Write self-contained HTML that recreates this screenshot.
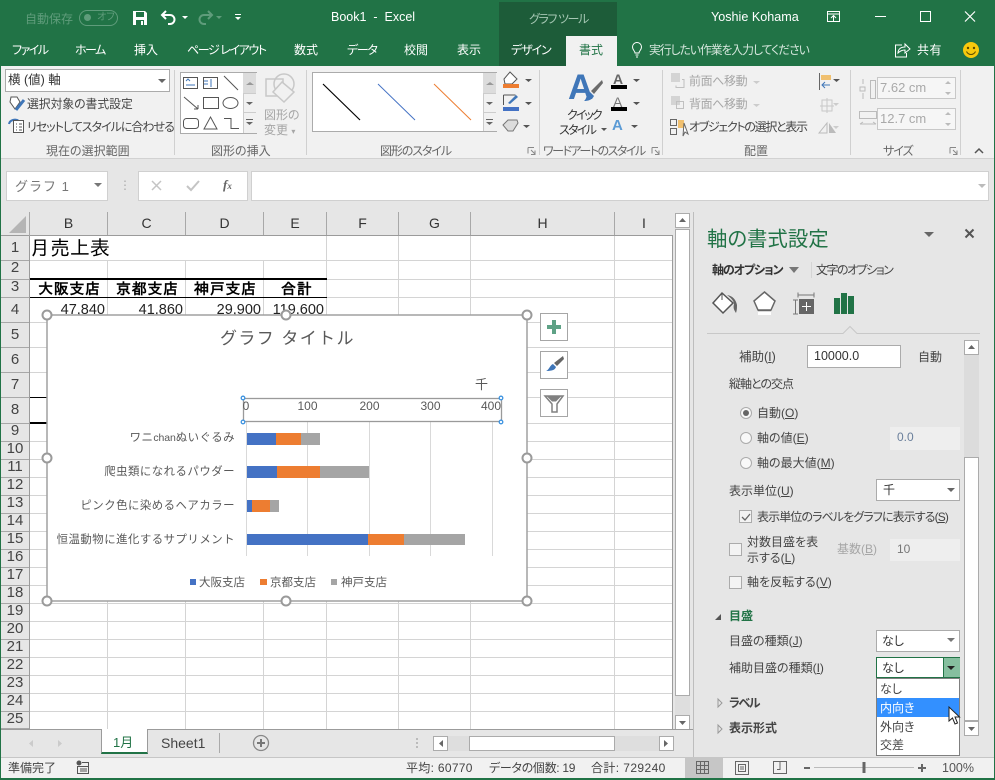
<!DOCTYPE html>
<html lang="ja"><head><meta charset="utf-8"><title>Book1 - Excel</title>
<style>
html,body{margin:0;padding:0;width:995px;height:780px;overflow:hidden;background:#e6e6e6}
body{position:relative;font-family:"Liberation Sans","Noto Sans CJK JP",sans-serif;font-size:12px;color:#444;font-feature-settings:"palt"}
.a,.t,.r,.h{position:absolute}
.t{white-space:nowrap;line-height:16px;height:16px}
.w{color:#fff}.g{color:#a6a6a6}
.np{font-feature-settings:normal}
.tab{color:#fff;top:42px;font-size:12px}
.gl{top:143px;color:#666;font-size:12px}
.sep{position:absolute;top:70px;width:1px;height:85px;background:#d0d0d0}
.box{position:absolute;background:#fff;border:1px solid #ababab;box-sizing:border-box}
.r{left:1px;width:28px;text-align:center;font-size:15px;color:#444;background:#e6e6e6;overflow:hidden;border-bottom:1px solid #a8a8a8;box-sizing:border-box}
.h{top:212px;height:23px;text-align:center;line-height:23px;font-size:14px;color:#333;border-right:1px solid #a8a8a8;box-sizing:border-box}
.hl{position:absolute;left:30px;width:642px;height:1px;background:#d4d4d4}
.vl{position:absolute;top:236px;height:493px;width:1px;background:#d4d4d4}
.c{position:absolute;font-family:"IPAGothic","Noto Sans CJK JP",sans-serif;color:#000;white-space:nowrap}
.n{position:absolute;top:302px;font-size:14.5px;line-height:16px;color:#222;text-align:right;white-space:nowrap}
.p{font-size:12px;color:#444}
.sel{position:absolute;background:#fff;border:1px solid #ababab;box-sizing:border-box;height:22px;left:876px;width:84px}
.dis{position:absolute;background:#eee;left:890px;width:70px;height:23px;color:#6a7f9b;line-height:21px;padding-left:7px;box-sizing:border-box;font-size:12px}
.cb{position:absolute;width:11px;height:11px;border:1px solid #ababab;background:#f3f3f3}
.rad{position:absolute;width:10px;height:10px;border:1px solid #ababab;border-radius:50%;background:#f8f8f8;left:740px}
.tri{position:absolute;width:0;height:0;border-left:4px solid transparent;border-right:4px solid transparent;border-top:4px solid #666}
svg{position:absolute;overflow:visible}
</style></head><body>

<!-- title bar -->
<div class="a" style="left:0;top:0;width:995px;height:66px;background:#217346"></div>
<div class="a" style="left:499px;top:2px;width:118px;height:64px;background:#1d5c39"></div>
<div class="a" style="left:566px;top:36px;width:51px;height:30px;background:#f1f1f1"></div>
<div class="t" style="left:25px;top:11px;color:#5f9c7b">自動保存</div>
<div class="a" style="left:79px;top:10px;width:37px;height:14px;border:1px solid #5f9c7b;border-radius:8px"></div>
<div class="a" style="left:84px;top:14px;width:7px;height:7px;border-radius:50%;background:#5f9c7b"></div>
<div class="t" style="left:97px;top:10px;color:#5f9c7b;font-size:10px">オフ</div>
<svg style="left:0;top:0" width="300" height="36">
<path d="M133 11h12l2 2v12h-14z" fill="#fff"/><rect x="136" y="12" width="8" height="5" fill="#217346"/><rect x="136" y="20" width="8" height="5" fill="#217346"/><rect x="141" y="21" width="2" height="4" fill="#fff"/>
<path d="M166 11l-4 4 4 4M162 15h8a4.500 4.500 0 0 1 0 9h-2" fill="none" stroke="#fff" stroke-width="2"/><path d="M182 16h6l-3 3z" fill="#fff"/>
<path d="M208 11l4 4-4 4M212 15h-8a4.500 4.500 0 0 0 0 9h2" fill="none" stroke="#5f9c7b" stroke-width="2"/><path d="M216 16h6l-3 3z" fill="#5f9c7b"/>
<rect x="235" y="14" width="6" height="1" fill="#fff"/><path d="M235 17h6l-3 3z" fill="#fff"/>
</svg>
<div class="t w" style="left:331px;top:9px;font-size:12.500px;white-space:pre">Book1  -  Excel</div>
<div class="t" style="left:529px;top:11px;color:#a5c7b3;font-size:12px;letter-spacing:-1.4px">グラフ ツール</div>
<div class="t w" style="left:711px;top:9px;font-size:12.600px">Yoshie Kohama</div>
<svg style="left:820px;top:5px" width="170" height="24" fill="none" stroke="#fff">
<rect x="7.500" y="6.500" width="12" height="10"/><path d="M7 9h13M13.500 16v-5M11 13l2.500-2.500 2.500 2.500"/>
<path d="M55 11.500h11"/><rect x="100.500" y="6.500" width="10" height="10"/><path d="M145 6.500l10 10M155 6.500l-10 10" stroke-width="1.200"/>
</svg>

<div class="t tab" style="left:12px;letter-spacing:-1.500px">ファイル</div>
<div class="t tab" style="left:75px;letter-spacing:-1.500px">ホーム</div>
<div class="t tab" style="left:134px">挿入</div>
<div class="t tab" style="left:187px;letter-spacing:-1.400px">ページ レイアウト</div>
<div class="t tab" style="left:294px">数式</div>
<div class="t tab" style="left:347px;letter-spacing:-1.300px">データ</div>
<div class="t tab" style="left:404px">校閲</div>
<div class="t tab" style="left:457px">表示</div>
<div class="t tab" style="left:511px;letter-spacing:-1.100px">デザイン</div>
<div class="t tab" style="left:579px;color:#217346">書式</div>
<div class="t tab" style="left:649px;color:#d5e6dc;font-size:11.800px;letter-spacing:-1px">実行したい作業を入力してください</div>
<svg style="left:630px;top:40px" width="16" height="20" fill="none" stroke="#fff"><path d="M5 13c0-2-2.500-3-2.500-6a4.500 4.500 0 0 1 9 0c0 3-2.500 4-2.500 6zM5.500 15h3M6 17h2"/></svg>
<svg style="left:893px;top:42px" width="20" height="16" fill="none" stroke="#fff"><path d="M9 3H2.500v12h11v-4M5 11c0-4 3-6 7-6V2l5 5-5 4V8c-3 0-5 1-7 3z"/></svg>
<div class="t w" style="left:917px;top:42px;letter-spacing:.5px">共有</div>
<svg style="left:962px;top:41px" width="18" height="18"><circle cx="9" cy="9" r="8" fill="#f8c90d"/><circle cx="6" cy="7" r="1.200" fill="#5a4b00"/><circle cx="12" cy="7" r="1.200" fill="#5a4b00"/><path d="M4.500 10.500c2 4 7 4 9 0" fill="none" stroke="#5a4b00"/></svg>

<!-- ribbon -->
<div class="a" style="left:1px;top:66px;width:993px;height:92px;background:#f1f1f1;border-bottom:1px solid #d2d2d2"></div>
<div class="a" style="left:0;top:66px;width:1px;height:714px;background:#217346"></div>
<div class="a" style="left:994px;top:66px;width:1px;height:714px;background:#217346"></div>
<div class="sep" style="left:174px"></div><div class="sep" style="left:306px"></div><div class="sep" style="left:539px"></div><div class="sep" style="left:662px"></div><div class="sep" style="left:850px"></div><div class="sep" style="left:960px"></div>

<div class="box" style="left:5px;top:69px;width:165px;height:23px"></div>
<div class="t" style="left:8px;top:72px;color:#333;font-size:12.500px;white-space:pre">横 (値) 軸</div>
<div class="tri" style="left:158px;top:79px"></div>
<svg style="left:8px;top:95px" width="18" height="40" fill="none">
<path d="M3 2h6l3 5-5 7-5-7z" fill="#fff" stroke="#555"/><path d="M8 15l4-5 4-5" stroke="#3f76b8" stroke-width="3"/>
<path d="M1 29a6 5 0 0 1 10-3" stroke="#3f76b8" stroke-width="2"/><rect x="5.500" y="25.500" width="10" height="12" fill="#fff" stroke="#555"/><path d="M8 29h1M8 32h1M8 35h1M11 29h3M11 32h3M11 35h3" stroke="#555"/>
</svg>
<div class="t" style="left:27px;top:96px;color:#444;font-size:11.800px">選択対象の書式設定</div>
<div class="t" style="left:27px;top:119px;color:#444;font-size:12px;letter-spacing:-1px">リセットしてスタイルに合わせる</div>
<div class="t gl" style="left:46px">現在の選択範囲</div>

<div class="box" style="left:180px;top:72px;width:77px;height:62px"></div>
<div class="a" style="left:243px;top:73px;width:13px;height:60px;background:#f1f1f1;border-left:1px solid #ccc"></div>
<div class="a" style="left:243px;top:73px;width:13px;height:20px;background:#dcdcdc"></div>
<div class="a" style="left:243px;top:93px;width:13px;height:1px;background:#ccc"></div><div class="a" style="left:243px;top:112px;width:13px;height:1px;background:#ccc"></div>
<svg style="left:0;top:0" width="300" height="140" fill="none" stroke="#555">
<rect x="183.500" y="77.500" width="14" height="11"/><rect x="203.500" y="77.500" width="14" height="11"/>
<path d="M186 81l2-2 2 2M186 85h9M204 81h4M204 84h4M211 79v8" stroke="#3f76b8"/><path d="M224 76l14 14M184 97l14 12M198 109v-4M198 109h-4"/>
<rect x="203.500" y="97.500" width="15" height="11"/><ellipse cx="230.500" cy="103" rx="7.500" ry="5.500"/>
<rect x="183.500" y="118.500" width="15" height="10" rx="3"/><path d="M204 129l6.500-12 6.500 12z"/><path d="M224 118.500h7v10h8"/>
<path d="M246 85l4-3 4 3z" fill="#999" stroke="none"/><path d="M246 102h7l-3.500 3z" fill="#666" stroke="none"/><path d="M246 122h7l-3.500 3z" fill="#666" stroke="none"/><path d="M246 119.500h7" stroke="#666"/>
<g stroke="#c8c8c8" stroke-width="1.500"><rect x="266" y="79" width="17" height="17"/><circle cx="284" cy="84" r="10"/><path d="M282 82l12 10-10 10-11-10z" fill="#f1f1f1"/></g>
</svg>
<div class="t g" style="left:264px;top:107px">図形の</div>
<div class="t g" style="left:264px;top:122px">変更 <span style="font-size:8px">▾</span></div>
<div class="t gl" style="left:211px">図形の挿入</div>

<div class="box" style="left:312px;top:72px;width:185px;height:60px"></div>
<div class="a" style="left:483px;top:73px;width:13px;height:58px;background:#f1f1f1;border-left:1px solid #ccc"></div>
<div class="a" style="left:483px;top:73px;width:13px;height:20px;background:#dcdcdc"></div>
<div class="a" style="left:483px;top:93px;width:13px;height:1px;background:#ccc"></div><div class="a" style="left:483px;top:112px;width:13px;height:1px;background:#ccc"></div>
<svg style="left:0;top:0" width="540" height="140" fill="none">
<path d="M323 84l37 36" stroke="#000" stroke-width="1.200"/><path d="M378 84l37 36" stroke="#4472c4"/><path d="M434 84l37 36" stroke="#ed7d31"/>
<path d="M486 85l4-3 4 3z" fill="#999"/><path d="M486 102h7l-3.500 3z" fill="#666"/><path d="M486 119.500h7" stroke="#666"/><path d="M486 122h7l-3.500 3z" fill="#666"/>
<path d="M510 72l7 7-5 5h-7l-1-5z" fill="#fff" stroke="#555"/><rect x="503" y="84" width="16" height="4" fill="#ed7d31"/><path d="M525 79h7l-3.500 3z" fill="#555"/>
<path d="M503.500 95h12M503.500 95v10" stroke="#555"/><path d="M508 103l8-8 2 2-8 7z" fill="#3f76b8"/><rect x="503" y="107" width="16" height="4" fill="#4472c4"/><path d="M525 102h7l-3.500 3z" fill="#555"/>
<path d="M503 125l5-5h9l1 3-5 8h-5z" fill="#dcdcdc" stroke="#777"/><path d="M523 125h7l-3.500 3z" fill="#555"/>
</svg>
<div class="t gl" style="left:380px;letter-spacing:-1.100px">図形のスタイル</div>
<div class="t" style="left:568px;top:72px;font-size:35px;line-height:32px;height:32px;color:#3f76b8;font-weight:bold">A</div>
<svg style="left:580px;top:78px" width="24" height="28"><path d="M22 2l1 3-9 11-3-3z" fill="#6b6b6b"/><path d="M10 14l4 4c-2 4-6 5-10 5 3-2 2-7 6-9z" fill="#3f76b8"/></svg>
<div class="t" style="left:567px;top:107px;color:#333;font-size:12px;letter-spacing:-2px">クイック</div>
<div class="t" style="left:559px;top:122px;color:#333;font-size:12px;letter-spacing:-1.700px">スタイル</div>
<div class="tri" style="left:601px;top:128px;border-top-color:#555;border-width:3px 3px 0"></div>
<div class="t" style="left:613px;top:71px;font-size:14px;font-weight:bold;color:#666">A</div><div class="a" style="left:611px;top:85px;width:16px;height:4px;background:#000"></div>
<div class="t" style="left:613px;top:94px;font-size:14px;color:#777">A</div><div class="a" style="left:611px;top:107px;width:16px;height:4px;background:#000"></div>
<div class="t" style="left:612px;top:118px;font-size:15px;font-weight:bold;color:#5b9bd5">A</div>
<svg style="left:630px;top:75px" width="14" height="60"><path d="M3 4h7l-3.500 3zM3 27h7l-3.500 3zM1 50h7l-3.500 3z" fill="#555"/></svg>
<div class="t gl" style="left:543px;letter-spacing:-1.500px">ワードアートのスタイル</div>
<svg style="left:525px;top:146px" width="440" height="12" fill="none" stroke="#888"><path d="M3 1.500h6M3 1.500v6M10 8L6 4M10 4.500V8.500H6"/><path d="M127 1.500h6M127 1.500v6M134 8l-4-4M134 4.500v4h-4"/><path d="M425 1.500h6M425 1.500v6M432 8l-4-4M432 4.500v4h-4"/></svg>
<svg style="left:665px;top:70px" width="185" height="70" fill="none">
<rect x="6" y="3" width="9" height="9" fill="#d4d4d4"/><path d="M17 9.500h2v8h-8v-2" stroke="#c0c0c0"/>
<rect x="6" y="26" width="9" height="9" fill="#d4d4d4"/><rect x="11.500" y="31.500" width="7" height="7" stroke="#c0c0c0"/>
<path d="M5.500 49.500h6v6h-6zM5.500 58.500h6v6h-6z" stroke="#666"/><rect x="13" y="50" width="6" height="8" fill="#f0c070"/><path d="M19 53l4 11-3-2-2 4z" fill="#fff" stroke="#666"/>
<path d="M88 11h7l-3.500 3zM88 34h7l-3.500 3z" fill="#ccc"/>
</svg>
<div class="t g" style="left:689px;top:73px;font-size:12px;letter-spacing:-.4px">前面へ移動</div>
<div class="t g" style="left:689px;top:96px;font-size:12px;letter-spacing:-.4px">背面へ移動</div>
<div class="t" style="left:689px;top:119px;color:#444;font-size:12px;letter-spacing:-1.300px">オブジェクトの選択と表示</div>
<div class="t gl" style="left:744px">配置</div>
<svg style="left:815px;top:70px" width="30" height="70" fill="none">
<path d="M4.500 3v17" stroke="#666"/><rect x="6" y="5" width="10" height="5" fill="#f0c070"/><path d="M15 15H7M10 12l-3 3 3 3" stroke="#3f76b8"/><path d="M18 9h7l-3.500 3z" fill="#555"/>
<g stroke="#c8c8c8"><rect x="7" y="30" width="10" height="11"/><path d="M5 36h14M12 28v15"/></g><path d="M18 33h6l-3 3z" fill="#ccc"/>
<path d="M4 63l8-10v10z" stroke="#bbb"/><path d="M14 53l7 10h-7z" fill="#bbb"/><path d="M18 56h6l-3 3z" fill="#ccc"/>
</svg>
<svg style="left:858px;top:78px" width="20" height="52" fill="none" stroke="#bbb"><rect x="12.500" y="2.500" width="5" height="18"/><path d="M5 1v5M5 15v6M2 9h5v4H2z"/><rect x="1.500" y="33.500" width="17" height="7"/><path d="M2 46h16M2 46l3-2M18 46l-3-2"/></svg>
<div class="box" style="left:877px;top:77px;width:79px;height:22px;background:#f6f6f6;border-color:#c8c8c8"></div>
<div class="box" style="left:877px;top:108px;width:79px;height:22px;background:#f6f6f6;border-color:#c8c8c8"></div>
<div class="t" style="left:880px;top:80px;color:#a9a9a9;font-size:13px">7.62 cm</div>
<div class="t" style="left:880px;top:111px;color:#a9a9a9;font-size:13px">12.7 cm</div>
<svg style="left:943px;top:80px" width="10" height="50" fill="#bbb"><path d="M2 4l3-3 3 3zM2 12h6l-3 3zM2 35l3-3 3 3zM2 43h6l-3 3z"/></svg>
<div class="t gl" style="left:883px;letter-spacing:-1px">サイズ</div>
<svg style="left:974px;top:147px" width="12" height="8" fill="none" stroke="#555" stroke-width="1.500"><path d="M1 6l4-4 4 4"/></svg>

<!-- formula bar -->
<div class="a" style="left:1px;top:159px;width:993px;height:53px;background:#e6e6e6"></div>
<div class="box" style="left:6px;top:171px;width:102px;height:30px;border-color:#d0d0d0"></div>
<div class="t np" style="left:15px;top:179px;color:#777;font-size:13px;letter-spacing:1px;white-space:pre">グラフ 1</div>
<div class="tri" style="left:94px;top:183px;border-top-color:#777"></div>
<div class="t" style="left:119px;top:177px;color:#aaa;font-size:12px;line-height:16px">⋮</div>
<div class="box" style="left:138px;top:171px;width:110px;height:30px;border-color:#d0d0d0"></div>
<svg style="left:150px;top:178px" width="90" height="16" fill="none"><path d="M2 3l9 9M11 3l-9 9" stroke="#c4c4c4" stroke-width="1.500"/><path d="M37 8l4 4 8-9" stroke="#c4c4c4" stroke-width="2"/></svg>
<div class="t" style="left:223px;top:177px;color:#666;font-family:'Liberation Serif',serif;font-style:italic;font-weight:bold;font-size:13px">f<span style="font-size:9px">x</span></div>
<div class="box" style="left:251px;top:171px;width:738px;height:30px;border-color:#d0d0d0"></div>
<div class="tri" style="left:978px;top:184px;border-top-color:#bbb"></div>

<!-- sheet -->
<div class="a" style="left:1px;top:212px;width:672px;height:24px;background:#e6e6e6;border-bottom:1px solid #9b9b9b;box-sizing:border-box"></div>
<div class="a" style="left:1px;top:212px;width:28px;height:24px;border-right:1px solid #a8a8a8"></div>
<svg style="left:8px;top:215px" width="20" height="20"><path d="M1 18L18 1v17z" fill="#b5b5b5"/></svg>
<div class="h" style="left:30px;width:78px">B</div><div class="h" style="left:108px;width:78px">C</div><div class="h" style="left:186px;width:78px">D</div><div class="h" style="left:264px;width:63px">E</div><div class="h" style="left:327px;width:72px">F</div><div class="h" style="left:399px;width:72px">G</div><div class="h" style="left:471px;width:144px">H</div><div class="h" style="left:615px;width:58px;border:0">I</div>

<div class="a" style="left:30px;top:236px;width:642px;height:493px;background:#fff"></div>
<div class="a" style="left:672px;top:236px;width:1px;height:493px;background:#9b9b9b"></div>
<div class="hl" style="top:260px"></div><div class="hl" style="top:279px"></div><div class="hl" style="top:297px"></div><div class="hl" style="top:322px"></div><div class="hl" style="top:347px"></div><div class="hl" style="top:372px"></div><div class="hl" style="top:397px"></div><div class="hl" style="top:423px"></div><div class="hl" style="top:441px"></div><div class="hl" style="top:459px"></div><div class="hl" style="top:477px"></div><div class="hl" style="top:495px"></div><div class="hl" style="top:513px"></div><div class="hl" style="top:531px"></div><div class="hl" style="top:549px"></div><div class="hl" style="top:567px"></div><div class="hl" style="top:585px"></div><div class="hl" style="top:603px"></div><div class="hl" style="top:621px"></div><div class="hl" style="top:639px"></div><div class="hl" style="top:657px"></div><div class="hl" style="top:675px"></div><div class="hl" style="top:693px"></div><div class="hl" style="top:711px"></div>
<div class="vl" style="left:107px;top:260px;height:469px"></div><div class="vl" style="left:185px;top:260px;height:469px"></div><div class="vl" style="left:263px;top:260px;height:469px"></div><div class="vl" style="left:326px;top:236px"></div><div class="vl" style="left:398px"></div><div class="vl" style="left:470px"></div><div class="vl" style="left:614px"></div>

<div class="r" style="top:236px;height:25px;line-height:24px">1</div>
<div class="r" style="top:261px;height:19px;line-height:14px">2</div>
<div class="r" style="top:280px;height:18px;line-height:14px">3</div>
<div class="r" style="top:298px;height:25px;line-height:24px">4</div>
<div class="r" style="top:323px;height:25px;line-height:24px">5</div>
<div class="r" style="top:348px;height:25px;line-height:24px">6</div>
<div class="r" style="top:373px;height:25px;line-height:24px">7</div>
<div class="r" style="top:398px;height:26px;line-height:24px">8</div>
<div class="r" style="top:424px;height:18px;line-height:13px">9</div>
<div class="r" style="top:442px;height:18px;line-height:13px">10</div>
<div class="r" style="top:460px;height:18px;line-height:13px">11</div>
<div class="r" style="top:478px;height:18px;line-height:13px">12</div>
<div class="r" style="top:496px;height:18px;line-height:13px">13</div>
<div class="r" style="top:514px;height:18px;line-height:13px">14</div>
<div class="r" style="top:532px;height:18px;line-height:13px">15</div>
<div class="r" style="top:550px;height:18px;line-height:13px">16</div>
<div class="r" style="top:568px;height:18px;line-height:13px">17</div>
<div class="r" style="top:586px;height:18px;line-height:13px">18</div>
<div class="r" style="top:604px;height:18px;line-height:13px">19</div>
<div class="r" style="top:622px;height:18px;line-height:13px">20</div>
<div class="r" style="top:640px;height:18px;line-height:13px">21</div>
<div class="r" style="top:658px;height:18px;line-height:13px">22</div>
<div class="r" style="top:676px;height:18px;line-height:13px">23</div>
<div class="r" style="top:694px;height:18px;line-height:13px">24</div>
<div class="r" style="top:712px;height:17px;line-height:13px">25</div>
<div class="a" style="left:29px;top:236px;width:1px;height:493px;background:#9b9b9b"></div>

<div class="c np" style="left:30px;top:237px;font-size:20px;line-height:22px">月売上表</div>
<div class="a" style="left:30px;top:278px;width:297px;height:2px;background:#000"></div>
<div class="a" style="left:30px;top:297px;width:297px;height:1px;background:#000"></div>
<div class="c np" style="left:38px;top:281px;font-size:15px;line-height:16px;font-weight:bold;letter-spacing:.7px">大阪支店</div>
<div class="c np" style="left:116px;top:281px;font-size:15px;line-height:16px;font-weight:bold;letter-spacing:.7px">京都支店</div>
<div class="c np" style="left:194px;top:281px;font-size:15px;line-height:16px;font-weight:bold;letter-spacing:.7px">神戸支店</div>
<div class="c np" style="left:281px;top:281px;font-size:15px;line-height:16px;font-weight:bold;letter-spacing:.7px">合計</div>
<div class="n" style="left:30px;width:75px">47,840</div><div class="n" style="left:108px;width:75px">41,860</div><div class="n" style="left:186px;width:75px">29,900</div><div class="n" style="left:264px;width:60px">119,600</div>
<div class="a" style="left:30px;top:397px;width:17px;height:1px;background:#000"></div>
<div class="a" style="left:30px;top:422px;width:17px;height:2px;background:#000"></div>

<!-- chart -->
<div class="a" style="left:47px;top:315px;width:480px;height:286px;background:#fff"></div>
<svg style="left:0;top:0;font-feature-settings:normal" width="700" height="620">
<g stroke="#d9d9d9"><path d="M246.500 422v134M307.500 422v134M369.500 422v134M430.500 422v134M492.500 422v134"/></g>
<rect x="247" y="433" width="29" height="12" fill="#4472c4"/><rect x="276" y="433" width="25" height="12" fill="#ed7d31"/><rect x="301" y="433" width="19" height="12" fill="#a5a5a5"/>
<rect x="247" y="466" width="30" height="12" fill="#4472c4"/><rect x="277" y="466" width="43" height="12" fill="#ed7d31"/><rect x="320" y="466" width="49" height="12" fill="#a5a5a5"/>
<rect x="247" y="500" width="5" height="12" fill="#4472c4"/><rect x="252" y="500" width="18" height="12" fill="#ed7d31"/><rect x="270" y="500" width="9" height="12" fill="#a5a5a5"/>
<rect x="247" y="534" width="121" height="11" fill="#4472c4"/><rect x="368" y="534" width="36" height="11" fill="#ed7d31"/><rect x="404" y="534" width="61" height="11" fill="#a5a5a5"/>
<rect x="47" y="315" width="480" height="286" fill="none" stroke="#a0a0a0" stroke-width="1.500"/>
<rect x="243.500" y="398.500" width="258" height="23" fill="none" stroke="#9a9a9a" stroke-width="1.300"/>
<g fill="#fff" stroke="#3f94e0" stroke-width="1.300"><circle cx="243" cy="398" r="1.800"/><circle cx="501" cy="398" r="1.800"/><circle cx="243" cy="422" r="1.800"/><circle cx="501" cy="422" r="1.800"/></g>
<g fill="#fff" stroke="#9a9a9a" stroke-width="2"><circle cx="47" cy="315" r="4.500"/><circle cx="286" cy="315" r="4.500"/><circle cx="527" cy="315" r="4.500"/><circle cx="47" cy="458" r="4.500"/><circle cx="527" cy="458" r="4.500"/><circle cx="47" cy="601" r="4.500"/><circle cx="286" cy="601" r="4.500"/><circle cx="527" cy="601" r="4.500"/></g>
<g font-family="'Liberation Sans','Noto Sans CJK JP',sans-serif" fill="#595959">
<text x="220" y="344" font-size="17" letter-spacing="1.400" xml:space="preserve">グラフ タイトル</text>
<text x="475" y="389" font-size="13">千</text>
<g font-size="12" text-anchor="middle"><text x="246" y="410">0</text><text x="307.500" y="410">100</text><text x="369.500" y="410">200</text><text x="430.500" y="410">300</text><text x="491" y="410">400</text></g>
<g font-size="11.400" text-anchor="end" letter-spacing=".5"><text x="235" y="441">ワニ<tspan font-size="10.500" letter-spacing="-.1">chan</tspan>ぬいぐるみ</text><text x="235" y="475">爬虫類になれるパウダー</text><text x="235" y="509">ピンク色に染めるヘアカラー</text><text x="235" y="543">恒温動物に進化するサプリメント</text></g>
<rect x="190" y="579" width="6" height="6" fill="#4472c4"/><rect x="260" y="579" width="7" height="6" fill="#ed7d31"/><rect x="331" y="579" width="6" height="6" fill="#a5a5a5"/>
<g font-size="11.500"><text x="199" y="586">大阪支店</text><text x="270" y="586">京都支店</text><text x="341" y="586">神戸支店</text></g>
</g>
</svg>
<div class="box" style="left:540px;top:313px;width:28px;height:28px;border:1px solid #a6a6a6"></div>
<div class="box" style="left:540px;top:351px;width:28px;height:28px;border:1px solid #a6a6a6"></div>
<div class="box" style="left:540px;top:389px;width:28px;height:28px;border:1px solid #a6a6a6"></div>
<svg style="left:540px;top:313px" width="28" height="104">
<path d="M12 7h4v5h5v4h-5v5h-4v-5H7v-4h5z" fill="#5ea286"/>
<path d="M23 43l1 3-7 7-3-3z" fill="#666"/><path d="M13 51l3 3c-1 3-4 4-10 4 3-1 4-6 7-7z" fill="#3f76b8"/>
<path d="M5 83h18l-6 8v8h-5v-8z" fill="#fff" stroke="#808080" stroke-width="1.500"/><path d="M7 83.500h14l-5 5h-4z" fill="#808080"/>
</svg>

<!-- vertical scroll sheet -->
<div class="a" style="left:675px;top:213px;width:15px;height:517px;background:#dedede"></div>
<div class="box" style="left:675px;top:213px;width:15px;height:15px"></div><div class="box" style="left:675px;top:229px;width:15px;height:467px"></div><div class="box" style="left:675px;top:715px;width:15px;height:15px"></div>
<svg style="left:675px;top:213px" width="15" height="517"><path d="M4 9l3.500-4 3.500 4z" fill="#666"/><path d="M4 508h7l-3.500 4z" fill="#666"/></svg>

<!-- sheet tabs -->
<div class="a" style="left:1px;top:729px;width:692px;height:28px;background:#e6e6e6;border-top:1px solid #9b9b9b;box-sizing:border-box"></div>
<div class="a" style="left:101px;top:729px;width:47px;height:25px;background:#fff;border-left:1px solid #9b9b9b;border-right:1px solid #9b9b9b;border-bottom:2px solid #217346;box-sizing:border-box"></div>
<div class="t" style="left:113px;top:735px;color:#217346;font-size:13px">1月</div>
<div class="t" style="left:161px;top:735px;color:#444;font-size:14px">Sheet1</div>
<div class="a" style="left:219px;top:733px;width:1px;height:20px;background:#aaa"></div>
<svg style="left:20px;top:733px" width="260" height="20">
<path d="M13 7l-4 3.500 4 3.500zM38 7l4 3.500-4 3.500z" fill="#cbcbcb"/>
<circle cx="241" cy="10" r="7.500" fill="none" stroke="#888" stroke-width="1.300"/><path d="M241 6v8M237 10h8" stroke="#777" stroke-width="2"/>
</svg>
<div class="a" style="left:416px;top:738px;width:2px;height:2px;background:#bbb;box-shadow:0 4px #bbb,0 8px #bbb"></div>
<div class="a" style="left:447px;top:736px;width:212px;height:15px;background:#dedede"></div>
<div class="box" style="left:433px;top:736px;width:15px;height:15px"></div><div class="box" style="left:469px;top:736px;width:146px;height:15px"></div><div class="box" style="left:659px;top:736px;width:15px;height:15px"></div>
<svg style="left:433px;top:736px" width="241" height="15"><path d="M10 4l-4 3.500 4 3.500zM231 4l4 3.500-4 3.500z" fill="#666"/></svg>

<!-- panel -->
<div class="a" style="left:693px;top:212px;width:1px;height:545px;background:#bdbdbd"></div>
<div class="t" style="left:707px;top:228px;color:#217346;font-size:20.400px;line-height:24px;height:24px">軸の書式設定</div>
<div class="tri" style="left:924px;top:232px;border-width:5px 5px 0;border-top-color:#666"></div>
<svg style="left:964px;top:228px" width="12" height="12"><path d="M1.500 1.500l8 8M9.500 1.500l-8 8" stroke="#555" stroke-width="2"/></svg>
<div class="t" style="left:712px;top:262px;color:#333;font-weight:bold;font-size:12px;letter-spacing:-1.100px">軸のオプション</div>
<div class="tri" style="left:789px;top:267px;border-width:6px 5px 0;border-top-color:#777"></div>
<div class="a" style="left:811px;top:262px;width:1px;height:16px;background:#d4d4d4"></div>
<div class="t" style="left:816px;top:262px;color:#444;font-size:12px;letter-spacing:-1.500px">文字のオプション</div>
<svg style="left:707px;top:290px" width="280" height="50" fill="none">
<path d="M6 13L15 3l11 10-10 10z" fill="#fff" stroke="#555" stroke-width="1.500"/><path d="M15 3v7" stroke="#555"/><path d="M20 5c6 1 9 5 10 10 0 3 0 5-1 8-2-3-3-5-2-9 0-3-3-6-7-9z" fill="#666"/>
<path d="M57.500 2L68 11l-4 9H51l-4-9z" fill="#fff" stroke="#666" stroke-width="1.500"/><rect x="51" y="21" width="13" height="4" fill="#fff"/><path d="M51 20.500h13" stroke="#666" stroke-width="1.500"/>
<path d="M91 5h16M91 2.500v5M107 2.500v5M86 10h5M86 24h5M88.500 10v14" stroke="#777"/><rect x="92" y="9" width="15" height="15" fill="#666"/><path d="M99.500 12v9M95 16.500h9" stroke="#fff"/>
<rect x="127" y="8" width="6" height="16" fill="#217346"/><rect x="134" y="3" width="6" height="21" fill="#217346"/><rect x="141" y="6" width="6" height="18" fill="#217346"/>
<path d="M0 43.500h136l7-7 7 7h123" stroke="#c8c8c8" fill="#e6e6e6"/>
</svg>

<div class="t p" style="left:739px;top:349px;font-size:12.500px">補助(<u>I</u>)</div>
<div class="box" style="left:807px;top:345px;width:94px;height:23px"></div>
<div class="t" style="left:814px;top:348px;color:#333;font-size:12.500px">10000.0</div>
<div class="t p" style="left:918px;top:349px">自動</div>
<div class="t p" style="left:729px;top:376px;letter-spacing:-1px">縦軸との交点</div>

<div class="rad" style="top:407px"></div><div class="a" style="left:743px;top:410px;width:6px;height:6px;border-radius:50%;background:#666"></div>
<div class="t p" style="left:757px;top:405px">自動(<u>O</u>)</div>
<div class="rad" style="top:432px"></div><div class="t p" style="left:757px;top:430px">軸の値(<u>E</u>)</div>
<div class="dis" style="top:427px">0.0</div>
<div class="rad" style="top:457px"></div><div class="t p" style="left:757px;top:455px">軸の最大値(<u>M</u>)</div>
<div class="t p" style="left:729px;top:483px">表示単位(<u>U</u>)</div>
<div class="sel" style="top:479px"></div><div class="t" style="left:883px;top:482px;color:#333">千</div><div class="tri" style="left:947px;top:488px"></div>
<div class="cb" style="left:739px;top:510px"></div>
<svg style="left:739px;top:510px" width="14" height="14"><path d="M3 7l3 3 5-6" fill="none" stroke="#666" stroke-width="1.300"/></svg>
<div class="t p" style="left:757px;top:509px;letter-spacing:-.9px">表示単位のラベルをグラフに表示する(<u>S</u>)</div>
<div class="cb" style="left:729px;top:543px"></div>
<div class="t p" style="left:747px;top:534px">対数目盛を表</div>
<div class="t p" style="left:747px;top:550px">示する(<u>L</u>)</div>
<div class="t g" style="left:837px;top:541px">基数(<u>B</u>)</div>
<div class="dis" style="top:539px;color:#777;height:22px">10</div>
<div class="cb" style="left:729px;top:576px"></div>
<div class="t p" style="left:747px;top:574px">軸を反転する(<u>V</u>)</div>

<svg style="left:713px;top:610px" width="10" height="125"><path d="M2 10l6-6v6z" fill="#555"/><path d="M5 89l4 4-4 4zM5 115l4 4-4 4z" fill="none" stroke="#999"/></svg>
<div class="t" style="left:729px;top:608px;color:#217346;font-weight:bold">目盛</div>
<div class="t p" style="left:729px;top:633px">目盛の種類(<u>J</u>)</div>
<div class="sel" style="top:630px"></div><div class="t" style="left:882px;top:633px;color:#333">なし</div><div class="tri" style="left:947px;top:638px;border-top-color:#777"></div>
<div class="t p" style="left:729px;top:660px">補助目盛の種類(<u>I</u>)</div>
<div class="sel" style="top:657px;height:21px;border-color:#217346"></div><div class="t" style="left:882px;top:660px;color:#333">なし</div>
<div class="a" style="left:943px;top:658px;width:16px;height:19px;background:#86bf9f;border-left:1px solid #217346"></div><div class="tri" style="left:947px;top:666px;border-top-color:#222"></div>
<div class="t" style="left:729px;top:695px;color:#444;font-weight:bold;letter-spacing:-1.500px">ラベル</div>
<div class="t" style="left:729px;top:720px;color:#444;font-weight:bold">表示形式</div>

<!-- panel scroll -->
<div class="a" style="left:964px;top:340px;width:15px;height:395px;background:#dcdcdc"></div>
<div class="box" style="left:964px;top:340px;width:15px;height:15px"></div><div class="box" style="left:964px;top:457px;width:15px;height:264px"></div><div class="box" style="left:964px;top:721px;width:15px;height:15px"></div>
<svg style="left:964px;top:340px" width="15" height="396"><path d="M4 9l3.500-4 3.500 4z" fill="#666"/><path d="M4 387h7l-3.500 4z" fill="#666"/></svg>

<!-- dropdown -->
<div class="box" style="left:876px;top:678px;width:84px;height:78px;border-color:#7f7f7f"></div>
<div class="a" style="left:877px;top:698px;width:82px;height:19px;background:#3390ff"></div>
<div class="t" style="left:880px;top:681px;color:#444">なし</div>
<div class="t w" style="left:880px;top:700px">内向き</div>
<div class="t" style="left:880px;top:719px;color:#444">外向き</div>
<div class="t" style="left:880px;top:737px;color:#444">交差</div>
<svg style="left:948px;top:706px" width="14" height="20"><path d="M1 1v14l3.500-3 2.500 6 2.500-1-2.500-6h4.500z" fill="#fff" stroke="#222"/></svg>

<!-- status -->
<div class="a" style="left:1px;top:757px;width:993px;height:21px;background:#f1f1f1;border-top:1px solid #c6c6c6;box-sizing:border-box"></div>
<div class="a" style="left:0;top:778px;width:995px;height:2px;background:#217346"></div>
<div class="t" style="left:8px;top:760px;color:#444">準備完了</div>
<svg style="left:76px;top:760px" width="14" height="14"><circle cx="3" cy="3" r="2.500" fill="#555"/><path d="M1.500 6.500h11v7h-11zM6 2.500h6.500v4M4 9h7M4 11h7" fill="none" stroke="#555"/></svg>
<div class="t" style="left:406px;top:760px;color:#444;font-size:12px;letter-spacing:.3px">平均: 60770</div>
<div class="t" style="left:489px;top:760px;color:#444;font-size:12px;letter-spacing:-.3px">データの個数: 19</div>
<div class="t" style="left:591px;top:760px;color:#444;font-size:12px;letter-spacing:.4px">合計: 729240</div>
<div class="a" style="left:685px;top:758px;width:38px;height:20px;background:#c6c6c6"></div>
<svg style="left:695px;top:760px" width="290" height="16" fill="none" stroke="#666">
<path d="M1.500 1.500h12v12h-12zM1.500 5.500h12M1.500 9.500h12M5.500 1.500v12M9.500 1.500v12"/>
<path d="M40.500 1.500h13v13h-13zM43.500 4.500h7v7h-7zM45 7h4M45 9h4"/>
<path d="M78.500 1.500h13v12h-13zM85 1.500v8h-3"/>
<path d="M109 8h6" stroke-width="2"/><path d="M119 7.500h100" stroke="#bbb"/><rect x="167.500" y="2" width="3" height="11" fill="#666" stroke="none"/><path d="M223 8h8M227 4v8" stroke-width="2"/>
</svg>
<div class="t" style="left:942px;top:760px;color:#555;font-size:12.500px">100%</div>
</body></html>
